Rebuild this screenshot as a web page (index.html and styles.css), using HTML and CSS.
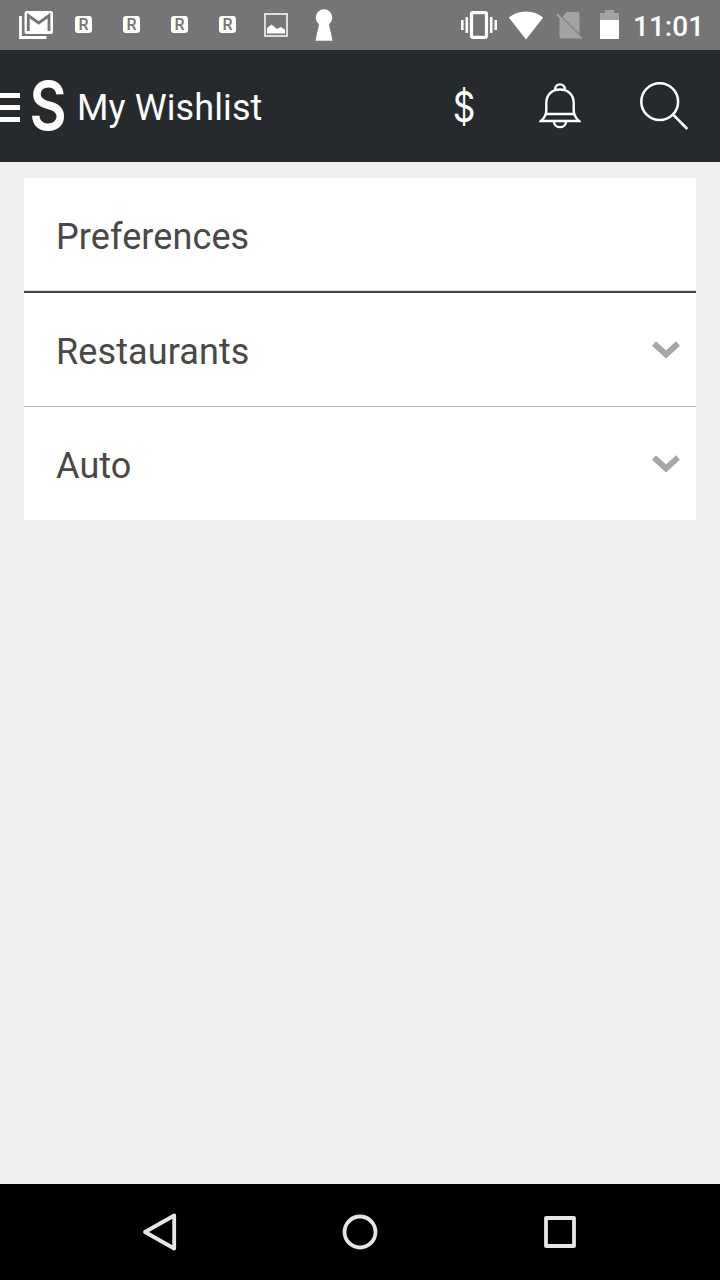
FILE: index.html
```
<!DOCTYPE html>
<html lang="en">
<head>
    <meta charset="UTF-8">
    <meta name="viewport" content="width=device-width, initial-scale=1.0">
    <title>My Wishlist</title>
    <link rel="stylesheet" href="styles.css">
</head>
<body>

    <!-- Status Bar -->
    <div class="status-bar">
        <div class="notifications">
            <div class="slot">
                <svg width="36" height="32" viewBox="0 0 36 32">
                    <path d="M2.500 7v21.500h26" fill="none" stroke="#fff" stroke-width="2.800"/>
                    <rect x="6.500" y="2" width="28.500" height="23" rx="2.500" fill="#fff"/>
                    <path d="M10.300 22V6.500L20.700 14L31 6.500V22" fill="none" stroke="#757575" stroke-width="2.800"/>
                </svg>
            </div>
            <div class="slot"><span class="badge">R</span></div>
            <div class="slot"><span class="badge">R</span></div>
            <div class="slot"><span class="badge">R</span></div>
            <div class="slot"><span class="badge">R</span></div>
            <div class="slot">
                <svg width="24" height="24" viewBox="0 0 24 24">
                    <rect x="1" y="1" width="22" height="22" fill="none" stroke="#e8e8e8" stroke-width="1.800"/>
                    <path d="M3 20.500V15l4.500-3.500 5.500 4.500 3.500-2 4.500 2.500v4z" fill="#fff"/>
                </svg>
            </div>
            <div class="slot">
                <svg width="18" height="32" viewBox="0 0 18 32">
                    <circle cx="9" cy="8.500" r="8.300" fill="#fff"/>
                    <path d="M4.500 13h9l4 18.800h-17z" fill="#fff"/>
                </svg>
            </div>
        </div>
        <div class="system">
            <svg class="vibrate" width="36" height="28" viewBox="0 0 36 28">
                <rect x="10.500" y="1.700" width="15" height="24.600" rx="1.500" fill="none" stroke="#fff" stroke-width="3.200"/>
                <path d="M1.300 9v10M5.800 6v16M30.200 6v16M34.700 9v10" stroke="#fff" stroke-width="2.600"/>
            </svg>
            <svg class="wifi" width="36" height="29" viewBox="0 0 36 29">
                <path d="M.8 6.500Q8 .5 18 .5T35.200 6.500L18 28.500z" fill="#fff"/>
            </svg>
            <svg class="sim" width="27" height="28" viewBox="0 0 27 28">
                <path d="M10.500 0H21.500Q23.500 0 23.500 2V22L6.500 5zM3.500 5L24 25.500Q23.500 26.500 21.500 26.500H5.500Q3.500 26.500 3.500 24.500z" fill="#a3a3a3"/>
                <path d="M1 2.200l24.500 24.500" stroke="#a3a3a3" stroke-width="2.200"/>
            </svg>
            <svg class="battery" width="19" height="29" viewBox="0 0 19 29">
                <path d="M0 10V3h5V0h9v3h5v7z" fill="#a3a3a3"/>
                <path d="M0 10h19v19H0z" fill="#fff"/>
            </svg>
            <span class="time">11:01</span>
        </div>
    </div>

    <!-- Header -->
    <header class="header">
        <div class="menu">
            <span></span>
            <span></span>
            <span></span>
        </div>
        <div class="logo">S</div>
        <h1 class="title">My Wishlist</h1>
        <div class="actions">
            <span class="dollar">$</span>
            <svg class="bell" width="42" height="46" viewBox="0 0 42 46" fill="none" stroke="#fff" stroke-width="2.400">
                <path d="M16 6.500C16.500 -.3 25.500 -.3 26 6.500"/>
                <path d="M2 38C5.500 35 7.300 31.500 7.300 27V20C7.300 11.500 13 6.500 21 6.500S34.700 11.500 34.700 20V27C34.700 31.500 36.500 35 40 38z"/>
                <path d="M6.500 31h29M15 39C15.500 45.800 26.500 45.800 27 39"/>
            </svg>
            <svg class="search" width="50" height="50" viewBox="0 0 50 50" fill="none" stroke="#fff" stroke-width="2.500">
                <circle cx="20.700" cy="20.700" r="18.400"/>
                <path d="M34 33.500L48.300 48"/>
            </svg>
        </div>
    </header>

    <!-- Preferences List -->
    <main class="content">
        <div class="card">
            <div class="row row-heading">Preferences</div>
            <div class="row">
                Restaurants
                <svg class="chevron" width="28" height="18" viewBox="0 0 28 18">
                    <path d="M2 2.500L14 13.500L26 2.500" fill="none" stroke="#a6a6a6" stroke-width="5.800"/>
                </svg>
            </div>
            <div class="row">
                Auto
                <svg class="chevron" width="28" height="18" viewBox="0 0 28 18">
                    <path d="M2 2.500L14 13.500L26 2.500" fill="none" stroke="#a6a6a6" stroke-width="5.800"/>
                </svg>
            </div>
        </div>
    </main>

    <!-- Navigation Bar -->
    <nav class="nav-bar">
        <svg width="40" height="40" viewBox="0 0 40 40">
            <path d="M5 20L34.200 3.500V36.500z"/>
        </svg>
        <svg width="40" height="40" viewBox="0 0 40 40">
            <circle cx="20" cy="20" r="15.500"/>
        </svg>
        <svg width="40" height="40" viewBox="0 0 40 40">
            <rect x="6" y="6" width="28" height="28"/>
        </svg>
    </nav>

</body>
</html>
```
FILE: styles.css
```
* {
    box-sizing: border-box;
}
body {
    font-family: Roboto, sans-serif;
    margin: 0;
    height: 1280px;
    display: flex;
    flex-direction: column;
    background-color: #eee;
    color: #484848;
    overflow: hidden;
}
svg {
    display: block;
    flex-shrink: 0;
}

/* Status bar */
.status-bar {
    height: 50px;
    display: flex;
    justify-content: space-between;
    align-items: center;
    padding: 0 17px 0 12px;
    background-color: #757575;
    color: #fff;
}
.notifications {
    display: flex;
}
.slot {
    width: 48px;
    height: 50px;
    display: flex;
    align-items: center;
    justify-content: center;
}
.badge {
    width: 17px;
    height: 17px;
    margin: 0 1px 1px 0;
    border-radius: 3px;
    background-color: #fff;
    color: #757575;
    font-size: 16px;
    font-weight: 500;
    line-height: 18px;
    text-align: center;
}
.system {
    display: flex;
    align-items: center;
}
.wifi {
    margin-left: 11px;
}
.sim {
    margin: 2px 0 0 12px;
}
.battery {
    margin-left: 17px;
    margin-bottom: 1px;
}
.time {
    width: 70px;
    margin-left: 14px;
    font-size: 28px;
    font-weight: 500;
    line-height: 32px;
    padding-top: 3px;
}

/* Header */
.header {
    height: 112px;
    display: flex;
    align-items: center;
    background-color: #262a2d;
    color: #fff;
}
.menu {
    width: 20px;
    display: flex;
    flex-direction: column;
    gap: 7px;
    padding-top: 3px;
}
.menu span {
    height: 5px;
    background-color: #fff;
}
.logo {
    width: 34px;
    margin-left: 11px;
    display: flex;
    justify-content: center;
    font-family: Inter, sans-serif;
    font-size: 68px;
    font-weight: 600;
    line-height: 110px;
    padding-bottom: 2px;
    transform: scaleX(0.84);
}
.title {
    margin: 0 0 0 12px;
    padding-top: 3px;
    font-size: 36px;
    font-weight: 400;
    line-height: 42px;
    letter-spacing: 0.1px;
    white-space: nowrap;
}
.actions {
    display: flex;
    align-items: center;
    margin-left: auto;
    padding-right: 31px;
}
.dollar {
    width: 24px;
    margin-right: 63px;
    display: flex;
    justify-content: center;
    font-family: Inter, sans-serif;
    font-size: 42px;
    font-weight: 400;
    line-height: 50px;
    padding-top: 2px;
    transform: scaleX(0.84);
}
.search {
    margin-left: 58px;
}

/* Preferences list */
.content {
    flex: 1;
    padding: 16px 24px;
}
.card {
    background-color: #fff;
}
.row {
    height: 113px;
    display: flex;
    align-items: center;
    justify-content: space-between;
    padding: 4px 16px 0 32px;
    font-size: 36px;
    letter-spacing: 0.1px;
}
.row + .row + .row {
    height: 114px;
    border-top: 1px solid #bbb;
}
.row-heading {
    height: 115px;
    border-bottom: 2px solid #444;
    box-shadow: inset 0 -1px #ddd;
}
.chevron {
    margin-bottom: 3px;
}

/* Navigation bar */
.nav-bar {
    height: 96px;
    display: flex;
    justify-content: center;
    align-items: center;
    gap: 160px;
    background-color: #000;
}
.nav-bar svg {
    fill: none;
    stroke: #e6e6e6;
    stroke-width: 3.8;
    stroke-linejoin: round;
}
```
